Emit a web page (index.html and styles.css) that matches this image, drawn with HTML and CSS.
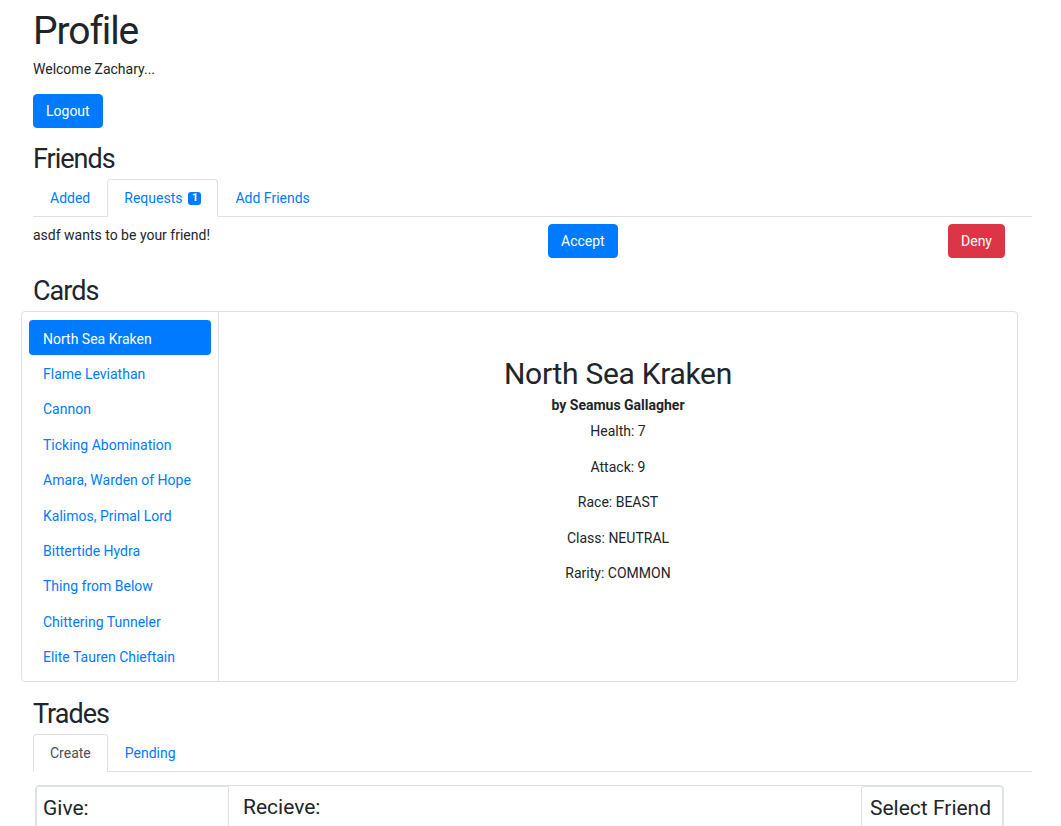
FILE: index.html
```html
<!DOCTYPE html>
<html lang="en">
<head>
<meta charset="utf-8">
<title>Profile</title>
<link rel="stylesheet" href="styles.css">
</head>
<body>
<div class="page">
  <h1 class="title">Profile</h1>
  <p class="welcome">Welcome Zachary...</p>
  <button class="btn btn-primary logout">Logout</button>

  <h3 class="section-title friends-title">Friends</h3>
  <ul class="tabs">
    <li class="tab">Added</li>
    <li class="tab active-blue">Requests <span class="badge">1</span></li>
    <li class="tab">Add Friends</li>
  </ul>
  <div class="request-row">
    <span class="request-text">asdf wants to be your friend!</span>
    <button class="btn btn-primary">Accept</button>
    <span class="spacer"></span>
    <button class="btn btn-danger">Deny</button>
  </div>

  <h3 class="section-title cards-title">Cards</h3>
  <div class="card-box">
    <ul class="card-list">
      <li class="pill active">North Sea Kraken</li>
      <li class="pill">Flame Leviathan</li>
      <li class="pill">Cannon</li>
      <li class="pill">Ticking Abomination</li>
      <li class="pill">Amara, Warden of Hope</li>
      <li class="pill">Kalimos, Primal Lord</li>
      <li class="pill">Bittertide Hydra</li>
      <li class="pill">Thing from Below</li>
      <li class="pill">Chittering Tunneler</li>
      <li class="pill">Elite Tauren Chieftain</li>
    </ul>
    <div class="card-detail">
      <h2 class="card-name">North Sea Kraken</h2>
      <div class="card-author">by Seamus Gallagher</div>
      <p class="stat">Health: 7</p>
      <p class="stat">Attack: 9</p>
      <p class="stat">Race: BEAST</p>
      <p class="stat">Class: NEUTRAL</p>
      <p class="stat">Rarity: COMMON</p>
    </div>
  </div>

  <h3 class="section-title trades-title">Trades</h3>
  <ul class="tabs">
    <li class="tab active-gray">Create</li>
    <li class="tab">Pending</li>
  </ul>
  <div class="trade-box">
    <div class="give-col"><h4 class="trade-head">Give:</h4></div>
    <div class="receive-col"><h4 class="trade-head">Recieve:</h4></div>
    <div class="friend-col"><h4 class="trade-head">Select Friend</h4></div>
  </div>
</div>
</body>
</html>
```

FILE: styles.css
```css
html, body {
  margin: 0;
  padding: 0;
  overflow: hidden;
  background: #fff;
}
body {
  font-family: Roboto, "Noto Sans", "Liberation Sans", sans-serif;
  font-size: 14px;
  line-height: 1.5;
  color: #212529;
}
.page {
  padding: 0 29px 0 33px;
}
.title {
  font-size: 39px;
  font-weight: 400;
  letter-spacing: -1.1px;
  line-height: 48px;
  margin: 7px 0 0;
}
.welcome {
  margin: 4px 0 0;
  line-height: 21px;
}
.btn {
  font-family: inherit;
  font-size: 14px;
  line-height: 21px;
  padding: 6px 12px 5px;
  border: 1px solid transparent;
  border-radius: 4px;
  color: #fff;
  cursor: pointer;
}
.btn-primary {
  background: #007bff;
  border-color: #007bff;
}
.btn-danger {
  background: #dc3545;
  border-color: #dc3545;
}
.logout {
  margin-top: 14px;
  display: block;
}
.section-title {
  font-size: 27px;
  font-weight: 400;
  letter-spacing: -1px;
  line-height: 34px;
  margin: 0;
}
.friends-title {
  margin-top: 14px;
}
.tabs {
  list-style: none;
  margin: 0;
  padding: 0;
  display: flex;
  border-bottom: 1px solid #dee2e6;
}
.friends-title + .tabs {
  margin-top: 3px;
}
.tab {
  padding: 8px 16px 7px;
  line-height: 21px;
  color: #007bff;
  border: 1px solid transparent;
  border-top-left-radius: 4px;
  border-top-right-radius: 4px;
  margin-bottom: -1px;
  display: flex;
  align-items: center;
  gap: 6px;
}
.active-blue {
  border-color: #dee2e6 #dee2e6 #fff;
  background: #fff;
}
.active-gray {
  color: #495057;
  border-color: #dee2e6 #dee2e6 #fff;
  background: #fff;
}
.badge {
  display: inline-flex;
  align-items: center;
  justify-content: center;
  width: 13px;
  height: 13px;
  background: #007bff;
  color: #fff;
  font-size: 10.5px;
  font-weight: 700;
  line-height: 1;
  border-radius: 3px;
}
.request-row {
  display: flex;
  align-items: flex-start;
  padding: 7px 27px 0 0;
}
.request-text {
  width: 515px;
  line-height: 21px;
  margin-top: 1px;
}
.spacer {
  flex: 1;
}
.cards-title {
  margin-top: 16px;
}
.card-box {
  margin: 3px 14px 0 -12px;
  border: 1px solid #dee2e6;
  border-radius: 4px;
  display: flex;
  height: 369px;
}
.card-list {
  list-style: none;
  margin: 0;
  padding: 8px 7px 7px 7px;
  width: 182px;
  border-right: 1px solid #dee2e6;
}
.pill {
  padding: 8.5px 14px 5.5px;
  line-height: 21.4px;
  color: #007bff;
  border-radius: 4px;
  white-space: nowrap;
}
.pill.active {
  background: #007bff;
  color: #fff;
}
.card-detail {
  flex: 1;
  text-align: center;
  padding-top: 44px;
}
.card-name {
  font-size: 30px;
  font-weight: 400;
  letter-spacing: -0.3px;
  line-height: 36px;
  margin: 0;
}
.card-author {
  font-weight: 700;
  line-height: 21px;
  margin-top: 3px;
}
.stat {
  margin: 5px 0 0;
  line-height: 21px;
}
.stat + .stat {
  margin-top: 14.5px;
}
.trades-title {
  margin-top: 15px;
}
.trades-title + .tabs {
  margin-top: 3px;
}
.trade-box {
  margin: 13px 28px 0 2px;
  border: 1px solid #dee2e6;
  border-radius: 4px;
  display: flex;
  height: 80px;
}
.give-col {
  width: 185px;
  border-right: 1px solid #dee2e6;
  border-left: 1px solid #dee2e6;
  border-top: 1px solid #dee2e6;
  border-top-left-radius: 3px;
  padding-left: 6px;
}
.receive-col {
  flex: 1;
  padding-left: 14px;
}
.friend-col {
  width: 132px;
  border: 1px solid #dee2e6;
  border-bottom: none;
  border-radius: 3px 3px 0 0;
  padding-left: 8px;
}
.trade-head {
  font-size: 21px;
  font-weight: 400;
  letter-spacing: 0;
  line-height: 25px;
  margin: 9px 0 0;
}
```
